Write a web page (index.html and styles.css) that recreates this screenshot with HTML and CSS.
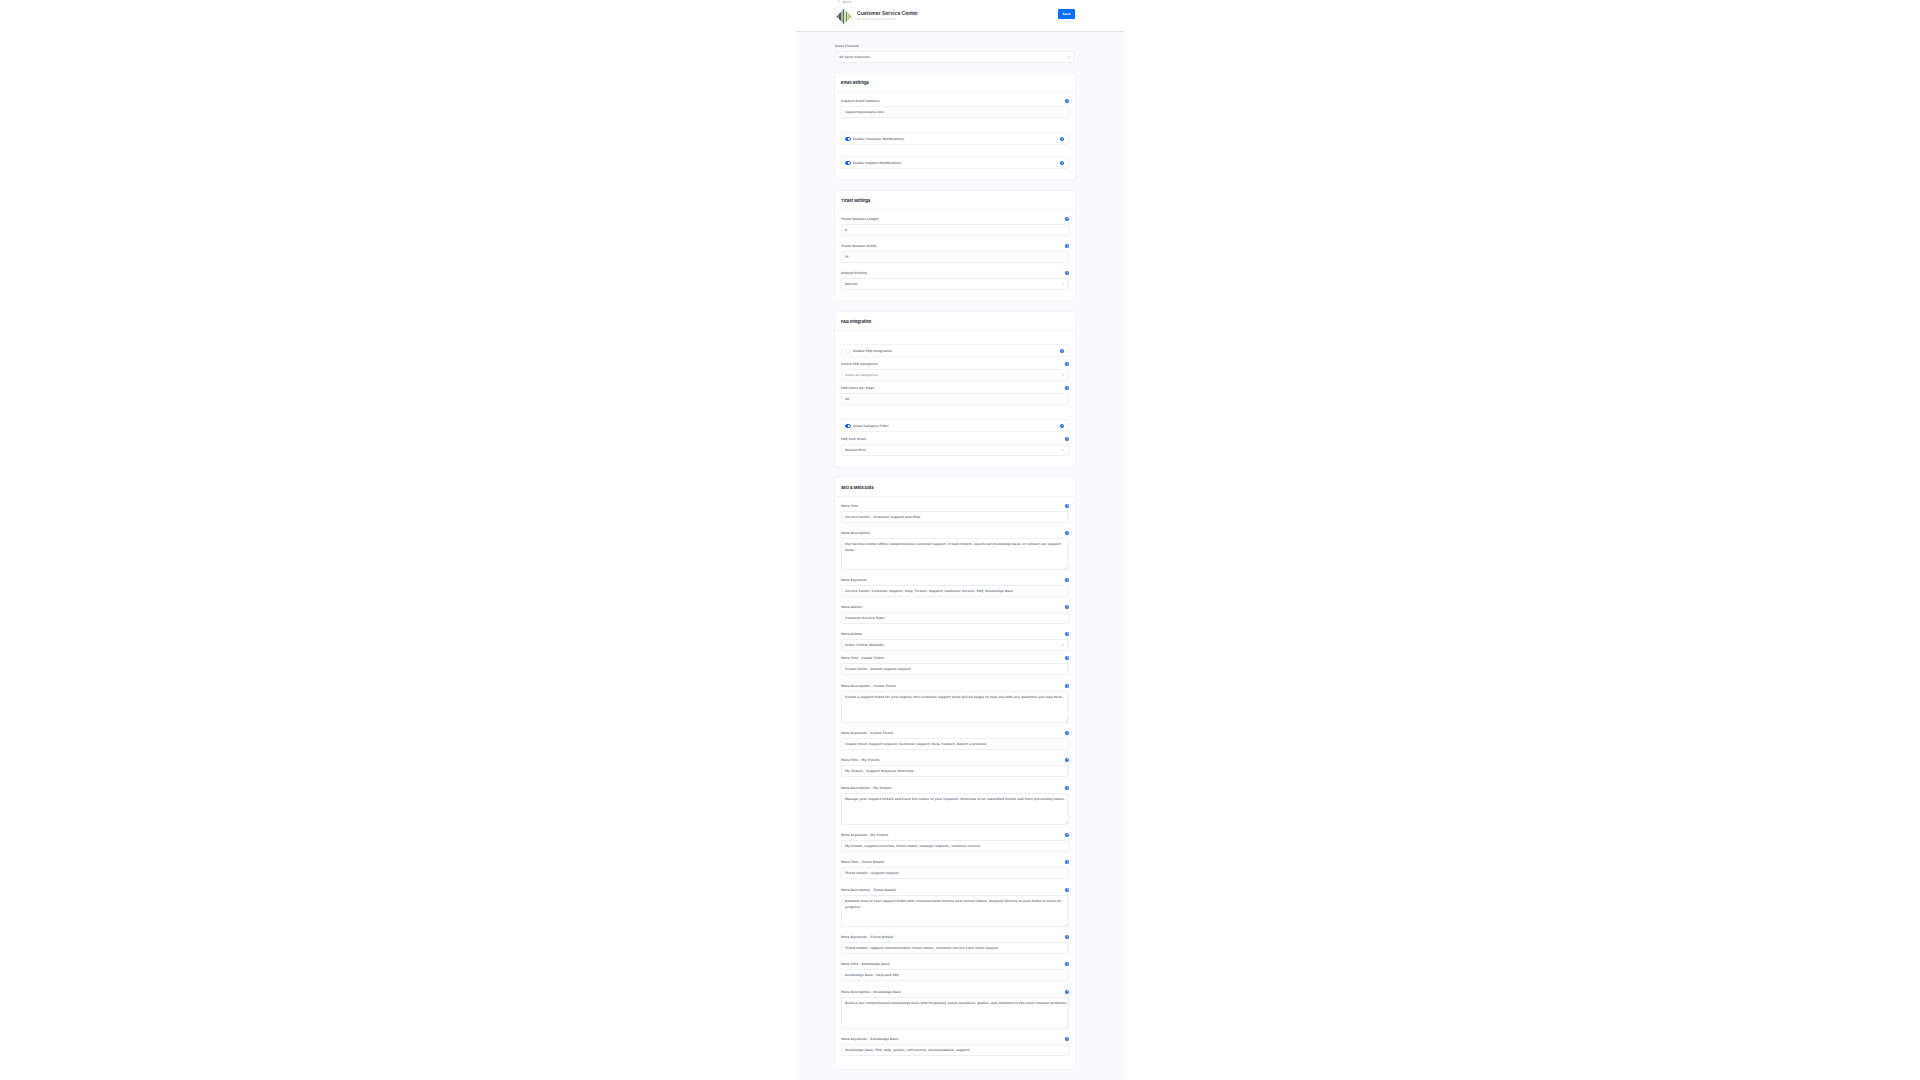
FILE: index.html
```
<!DOCTYPE html>
<html lang="en">
<head>
    <meta charset="UTF-8">
    <title>Customer Service Center</title>
    <link rel="stylesheet" href="styles.css">
</head>
<body>

<main class="page">
    <header class="page-header">
        <div class="header-main">
            <a class="back" href="#"><svg class="back-icon" viewBox="0 0 8 8"><path d="M5 1 2 4l3 3"/></svg>Back</a>
            <div class="plugin">
                <svg class="logo" viewBox="0 0 36 36">
                    <path fill="#5a6066" d="M1 18l5-5v10z"/>
                    <path fill="#3d4146" d="M7 12l4-4v20l-4-4z"/>
                    <path fill="#8a8f86" d="M12 7l3-4v30l-3-4z"/>
                    <path fill="#4f5a3c" d="M16 2l2-2v36l-2-2z"/>
                    <path fill="#c2dba0" d="M19 1l4 5v24l-4 5z"/>
                    <path fill="#5d7040" d="M23 6l2 2v20l-2 2z"/>
                    <path fill="#a3cb6c" d="M26 9l4 4v10l-4 4z"/>
                    <path fill="#7fa650" d="M31 14l4 4-4 4z"/>
                </svg>
                <div class="plugin-text">
                    <h1>Customer Service Center</h1>
                    <p>by First Place eCommerce</p>
                </div>
            </div>
        </div>
        <button class="save" type="button">Save</button>
    </header>

    <form class="content">
        <div class="channel">
            <label for="channel">Sales Channel</label>
            <select id="channel"><option>All Sales Channels</option></select>
        </div>

        <section class="card">
            <h2>Email Settings</h2>
            <div class="card-body">
                <div class="field">
                    <div class="field-head"><label for="email">Support Email Address</label><button class="help" type="button" aria-label="Help">?</button></div>
                    <input id="email" type="text" value="support@example.com">
                </div>
                <div class="switch">
                    <input id="notify-customer" type="checkbox" checked><label for="notify-customer">Enable Customer Notifications</label><button class="help" type="button" aria-label="Help">?</button>
                </div>
                <div class="switch">
                    <input id="notify-support" type="checkbox" checked><label for="notify-support">Enable Support Notifications</label><button class="help" type="button" aria-label="Help">?</button>
                </div>
            </div>
        </section>

        <section class="card">
            <h2>Ticket Settings</h2>
            <div class="card-body">
                <div class="field">
                    <div class="field-head"><label for="length">Ticket Number Length</label><button class="help" type="button" aria-label="Help">?</button></div>
                    <input id="length" type="text" value="8">
                </div>
                <div class="field">
                    <div class="field-head"><label for="prefix">Ticket Number Prefix</label><button class="help" type="button" aria-label="Help">?</button></div>
                    <input id="prefix" type="text" value="TI-">
                </div>
                <div class="field field-select">
                    <div class="field-head"><label for="priority">Default Priority</label><button class="help" type="button" aria-label="Help">?</button></div>
                    <select id="priority"><option>Normal</option></select>
                </div>
            </div>
        </section>

        <section class="card">
            <h2>FAQ Integration</h2>
            <div class="card-body">
                <div class="switch">
                    <input id="faq" type="checkbox"><label for="faq">Enable FAQ Integration</label><button class="help" type="button" aria-label="Help">?</button>
                </div>
                <div class="field field-select">
                    <div class="field-head"><label for="categories">Select FAQ Categories</label><button class="help" type="button" aria-label="Help">?</button></div>
                    <select id="categories" class="placeholder"><option>Show all categories</option></select>
                </div>
                <div class="field">
                    <div class="field-head"><label for="items">FAQ Items per Page</label><button class="help" type="button" aria-label="Help">?</button></div>
                    <input id="items" type="text" value="10">
                </div>
                <div class="switch">
                    <input id="filter" type="checkbox" checked><label for="filter">Show Category Filter</label><button class="help" type="button" aria-label="Help">?</button>
                </div>
                <div class="field field-select">
                    <div class="field-head"><label for="sort">FAQ Sort Order</label><button class="help" type="button" aria-label="Help">?</button></div>
                    <select id="sort"><option>Newest first</option></select>
                </div>
            </div>
        </section>

        <section class="card">
            <h2>SEO &amp; Meta Data</h2>
            <div class="card-body">
                <div class="field">
                    <div class="field-head"><label for="title">Meta Title</label><button class="help" type="button" aria-label="Help">?</button></div>
                    <input id="title" type="text" value="Service Center - Customer Support and Help">
                </div>
                <div class="field">
                    <div class="field-head"><label for="desc">Meta Description</label><button class="help" type="button" aria-label="Help">?</button></div>
                    <textarea id="desc">Our Service Center offers comprehensive customer support. Create tickets, search our knowledge base, or contact our support team.</textarea>
                </div>
                <div class="field">
                    <div class="field-head"><label for="keywords">Meta Keywords</label><button class="help" type="button" aria-label="Help">?</button></div>
                    <input id="keywords" type="text" value="Service Center, Customer Support, Help, Tickets, Support, Customer Service, FAQ, Knowledge Base">
                </div>
                <div class="field">
                    <div class="field-head"><label for="author">Meta Author</label><button class="help" type="button" aria-label="Help">?</button></div>
                    <input id="author" type="text" value="Customer Service Team">
                </div>
                <div class="field field-select">
                    <div class="field-head"><label for="robots">Meta Robots</label><button class="help" type="button" aria-label="Help">?</button></div>
                    <select id="robots"><option>Index, Follow (Default)</option></select>
                </div>

                <div class="field field-title">
                    <div class="field-head"><label for="create-title">Meta Title - Create Ticket</label><button class="help" type="button" aria-label="Help">?</button></div>
                    <input id="create-title" type="text" value="Create ticket - Submit support request">
                </div>
                <div class="field">
                    <div class="field-head"><label for="create-desc">Meta Description - Create Ticket</label><button class="help" type="button" aria-label="Help">?</button></div>
                    <textarea id="create-desc">Create a support ticket for your inquiry. Our customer support team will be happy to help you with any questions you may have.</textarea>
                </div>
                <div class="field">
                    <div class="field-head"><label for="create-keywords">Meta Keywords - Create Ticket</label><button class="help" type="button" aria-label="Help">?</button></div>
                    <input id="create-keywords" type="text" value="Create ticket, Support request, Customer support, Help, Contact, Report a problem">
                </div>

                <div class="field field-title">
                    <div class="field-head"><label for="my-title">Meta Title - My Tickets</label><button class="help" type="button" aria-label="Help">?</button></div>
                    <input id="my-title" type="text" value="My Tickets - Support Requests Overview">
                </div>
                <div class="field">
                    <div class="field-head"><label for="my-desc">Meta Description - My Tickets</label><button class="help" type="button" aria-label="Help">?</button></div>
                    <textarea id="my-desc">Manage your support tickets and track the status of your requests. Overview of all submitted tickets and their processing status.</textarea>
                </div>
                <div class="field">
                    <div class="field-head"><label for="my-keywords">Meta Keywords - My Tickets</label><button class="help" type="button" aria-label="Help">?</button></div>
                    <input id="my-keywords" type="text" value="My tickets, support overview, ticket status, manage requests, customer service">
                </div>

                <div class="field field-title">
                    <div class="field-head"><label for="detail-title">Meta Title - Ticket Details</label><button class="help" type="button" aria-label="Help">?</button></div>
                    <input id="detail-title" type="text" value="Ticket details - Support request">
                </div>
                <div class="field">
                    <div class="field-head"><label for="detail-desc">Meta Description - Ticket Details</label><button class="help" type="button" aria-label="Help">?</button></div>
                    <textarea id="detail-desc">Detailed view of your support ticket with communication history and current status. Respond directly to your ticket or track its progress.</textarea>
                </div>
                <div class="field">
                    <div class="field-head"><label for="detail-keywords">Meta Keywords - Ticket Details</label><button class="help" type="button" aria-label="Help">?</button></div>
                    <input id="detail-keywords" type="text" value="Ticket details, support communication, ticket status, customer service chat, track request">
                </div>

                <div class="field field-title">
                    <div class="field-head"><label for="kb-title">Meta Title - Knowledge Base</label><button class="help" type="button" aria-label="Help">?</button></div>
                    <input id="kb-title" type="text" value="Knowledge base - Help and FAQ">
                </div>
                <div class="field">
                    <div class="field-head"><label for="kb-desc">Meta Description - Knowledge Base</label><button class="help" type="button" aria-label="Help">?</button></div>
                    <textarea id="kb-desc">Browse our comprehensive knowledge base with frequently asked questions, guides, and solutions to the most common problems.</textarea>
                </div>
                <div class="field">
                    <div class="field-head"><label for="kb-keywords">Meta Keywords - Knowledge Base</label><button class="help" type="button" aria-label="Help">?</button></div>
                    <input id="kb-keywords" type="text" value="Knowledge base, FAQ, help, guides, self-service, documentation, support">
                </div>
            </div>
        </section>
    </form>
</main>

</body>
</html>
```
FILE: styles.css
```
* {
    box-sizing: border-box;
}

body {
    margin: 0;
    background: #fff;
    color: #7c858e;
    font-family: "DejaVu Sans", sans-serif;
    font-size: 3px;
    font-weight: 700;
    line-height: 6px;
}

h1, h2, p {
    margin: 0;
}

button, input, select, textarea {
    font: inherit;
    color: inherit;
    margin: 0;
}

.page {
    max-width: 328px;
    min-height: 100vh;
    margin: 0 auto;
    background: #f9fafe;
}

.page-header {
    display: flex;
    justify-content: space-between;
    align-items: flex-start;
    height: 32px;
    padding: 0 49px 0 39px;
    background: #fff;
    border-bottom: 1px solid #e1e5ea;
}

.header-main {
    display: flex;
    flex-direction: column;
    gap: 4px;
}

.back {
    display: flex;
    align-items: center;
    gap: 2px;
    height: 3px;
    padding-left: 2px;
    color: #b4bcc5;
    text-decoration: none;
}

.back-icon {
    width: 4px;
    height: 4px;
    fill: none;
    stroke: #a9b3be;
}

.plugin {
    display: flex;
    gap: 4px;
}

.logo {
    width: 18px;
    height: 19px;
    border: 1px solid #f5f7f9;
    border-radius: 2px;
}

.plugin-text {
    padding-top: 3px;
}

h1 {
    font-family: Inter, sans-serif;
    font-size: 5px;
    line-height: 6px;
    font-weight: 600;
    color: #1c2733;
}

.plugin-text p {
    font-weight: 400;
    color: #c4cbd3;
}

.save {
    width: 17px;
    height: 10px;
    margin-top: 9px;
    padding: 0;
    border: 0;
    border-radius: 1px;
    background: #0870ff;
    color: #fff;
}

.content {
    display: flex;
    flex-direction: column;
    gap: 12px;
    padding: 11px 49px 11px 39px;
}

.channel {
    display: flex;
    flex-direction: column;
    gap: 2px;
    margin-bottom: -2px;
}

.card {
    background: #fff;
    border-radius: 2px;
    box-shadow: 0 0 2px #e8ebf1;
}

h2 {
    padding: 7px 6px 5px;
    border-bottom: 1px solid #f3f5f8;
    font-family: Inter, sans-serif;
    font-size: 4px;
    line-height: 6px;
    font-weight: 700;
    color: #1c2733;
}

/* flex column, so the margins of fields and switches add up */
.card-body {
    display: flex;
    flex-direction: column;
    padding: 6px;
}

.field {
    margin-bottom: 7px;
}

.field-title {
    margin-bottom: 8px;
}

.field-select {
    margin-bottom: 4px;
}

.field-head {
    display: flex;
    justify-content: space-between;
    align-items: center;
    height: 6px;
    margin-bottom: 2px;
}

input[type="text"], select, textarea {
    display: block;
    width: 100%;
    height: 12px;
    padding: 0 3px;
    border: 1px solid #eceff3;
    border-radius: 1px;
    background: #fff;
}

select {
    appearance: none;
    background: #fff url("data:image/svg+xml,%3Csvg xmlns='http://www.w3.org/2000/svg' viewBox='0 0 8 8'%3E%3Cpath d='M1 2l3 4 3-4' fill='none' stroke='%237b858f' stroke-width='2'/%3E%3C/svg%3E") no-repeat right 4px center / 2px 2px;
}

.placeholder {
    color: #a3abb4;
}

textarea {
    height: 32px;
    padding: 2px 0 2px 3px;
    resize: none;
    overflow: hidden;
    background: #fff url("data:image/svg+xml,%3Csvg xmlns='http://www.w3.org/2000/svg' viewBox='0 0 8 8'%3E%3Cpath d='M8 0L0 8M8 4L4 8' stroke='%23a9b1ba'/%3E%3C/svg%3E") no-repeat right bottom / 3px 3px;
}

.help {
    width: 4px;
    height: 4px;
    padding: 0;
    border: 0;
    border-radius: 50%;
    background: #1766d6;
    color: #fff;
    line-height: 4px;
}

.switch {
    display: flex;
    align-items: center;
    gap: 2px;
    height: 13px;
    margin: 7px 0 4px;
    padding: 0 4px 0 3px;
    border: 1px solid #f0f2f5;
    border-radius: 1px;
}

.switch label {
    flex: 1;
}

.switch input {
    appearance: none;
    width: 6px;
    height: 4px;
    border: 1px solid #e6e9ed;
    border-radius: 2px;
    background: #fff;
}

.switch input:checked {
    border-color: #1766d6;
    background: linear-gradient(90deg, #1766d6 50%, #fff 50%);
}
```
